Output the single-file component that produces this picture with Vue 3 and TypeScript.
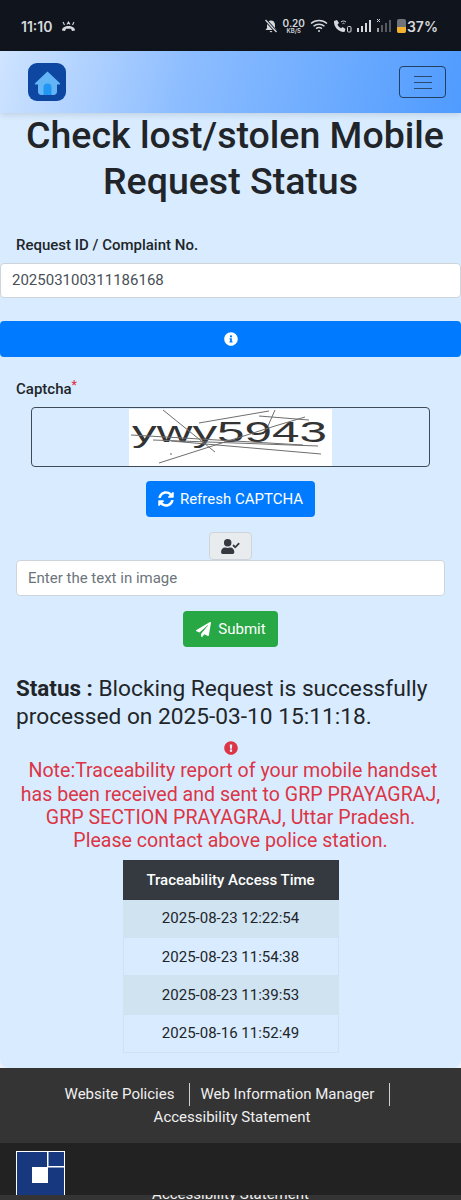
<script setup lang="ts">
const accessTimes = [
  '2025-08-23 12:22:54',
  '2025-08-23 11:54:38',
  '2025-08-23 11:39:53',
  '2025-08-16 11:52:49',
]
</script>

<template>
  <div class="screen">
    <div class="status-bar">
      <div class="status-left">
        <span class="clock">11:10</span>
        <svg width="15" height="11" viewBox="0 0 15 11" fill="#d5d8dc">
          <path d="M1 9.500c0-3 3-4.500 6.500-4.500S14 6.500 14 9.500l-3 .5-1-2.200H5L4 10z" />
          <path d="M3.500 4L2 1M6 3.500L7.500 1 9 3.500M11.500 4L13 1" stroke="#d5d8dc" fill="none" stroke-width="1.100" />
        </svg>
      </div>
      <div class="status-right">
        <svg width="14" height="14" viewBox="0 0 14 14" fill="#d5d8dc">
          <path d="M7 1.500c2.500 0 4 2 4 4.500v3l1.500 2h-11L3 9V6c0-2.500 1.500-4.500 4-4.500zM5.500 12h3L7 13.500z" />
          <path d="M1.500 1l11 12" stroke="#10141c" stroke-width="3" />
          <path d="M1.500 1l11 12" stroke="#d5d8dc" stroke-width="1.300" />
        </svg>
        <div class="speed"><span>0.20</span><span class="speed-unit">KB/S</span></div>
        <svg width="18" height="14" viewBox="0 0 18 14" fill="none" stroke="#d5d8dc" stroke-width="1.500">
          <path d="M1 4.500c4.500-4 11.500-4 16 0M3.500 7.200c3-2.700 8-2.700 11 0M6 9.700c1.700-1.300 4.300-1.300 6 0" />
          <circle cx="9" cy="12" r="1" fill="#d5d8dc" stroke="none" />
        </svg>
        <svg width="19" height="14" viewBox="0 0 19 14" fill="#d5d8dc">
          <path d="M1 2l3-1 2 3-1.500 1.500c.7 1.700 2 3 3.500 3.700L9.500 8l3 2-1 3C6 13.500 .5 8 1 2z" />
          <path d="M8 3c1.500-1.300 3.500-1.300 5 0M9.500 4.700c.7-.6 1.300-.6 2 0" stroke="#d5d8dc" fill="none" />
          <rect x="14.500" y="7.500" width="3.500" height="5.500" rx="1" fill="none" stroke="#d5d8dc" />
        </svg>
        <svg width="15" height="14" viewBox="0 0 15 14" fill="#d5d8dc">
          <rect x="0" y="9" width="2" height="4" /><rect x="4" y="7" width="2" height="6" />
          <rect x="8" y="4" width="2" height="9" /><rect x="12" y="1" width="2" height="12" />
        </svg>
        <svg width="15" height="14" viewBox="0 0 15 14" fill="#565a60">
          <path d="M0 0l3 3M3 0L0 3" stroke="#d5d8dc" fill="none" />
          <rect x="0" y="9" width="2" height="4" fill="#9a9da1" /><rect x="4" y="6" width="2" height="7" />
          <rect x="8" y="4" width="2" height="9" /><rect x="12" y="1" width="2" height="12" />
        </svg>
        <div class="battery"><div class="battery-fill"></div></div>
        <span class="battery-pct">37%</span>
      </div>
    </div>

    <nav class="navbar">
      <div class="home-logo">
        <svg width="27" height="27" viewBox="0 0 27 27">
          <path d="M13.500 2.500L26 14.200c.5.600.1 1.300-.6 1.300H23v7c0 2-1.300 3.500-3.500 3.500h-12C5.300 26 4 24.500 4 22.500v-7H1.600c-.7 0-1.100-.7-.6-1.300z" fill="#64b5f6" />
          <path d="M9.500 26v-7.500a4 4 0 0 1 8 0V26z" fill="#2196f3" />
        </svg>
      </div>
      <button class="toggler">
        <span></span><span></span><span></span>
      </button>
    </nav>

    <main class="content">
      <h1 class="title">Check lost/stolen Mobile Request Status</h1>

      <label class="field-label request-label">Request ID / Complaint No.</label>
      <div class="input request-input">202503100311186168</div>

      <div class="info-bar">
        <svg width="14" height="14" viewBox="0 0 512 512" fill="#fff">
          <path d="M256 8C119 8 8 119 8 256s111 248 248 248 248-111 248-248S393 8 256 8zm0 110a42 42 0 1 1 0 84 42 42 0 0 1 0-84zm56 254c0 7-5 12-12 12h-88c-7 0-12-5-12-12v-24c0-7 5-12 12-12h12v-64h-12c-7 0-12-5-12-12v-24c0-7 5-12 12-12h64c7 0 12 5 12 12v100h12c7 0 12 5 12 12z" />
        </svg>
      </div>

      <label class="field-label captcha-label">Captcha<span class="req">*</span></label>
      <div class="captcha-box">
        <svg class="captcha-img" width="203" height="57" viewBox="0 0 203 57">
          <rect width="203" height="57" fill="#fff" />
          <text x="3" y="33" class="captcha-text" textLength="195" lengthAdjust="spacingAndGlyphs">ywy5943</text>
          <g stroke="#6e6e6e" fill="none">
            <path d="M34 1l52 42M30 54L146 17 176 8M2 26l172 10M24 31l165 6M42 32l150 13M70 14l70-12M146 1l-7 16M130 7l50 4" />
          </g>
          <circle cx="42" cy="45" r="1" fill="#999" />
        </svg>
      </div>

      <div class="btn-row refresh-row">
        <button class="btn btn-blue">
          <svg width="16" height="16" viewBox="0 0 512 512" fill="#fff">
            <path d="M370.720 133.280C339.458 104.008 298.888 87.962 255.848 88c-77.458.068-144.328 53.178-162.791 126.850-1.344 5.363-6.122 9.150-11.651 9.150H24.103c-7.498 0-13.194-6.807-11.807-14.176C33.933 94.924 134.813 8 256 8c66.448 0 126.791 26.136 171.315 68.685L463.030 40.970C478.149 25.851 504 36.559 504 57.941V192c0 13.255-10.745 24-24 24H345.941c-21.382 0-32.090-25.851-16.971-40.971l41.750-41.749zM32 296h134.059c21.382 0 32.090 25.851 16.971 40.971l-41.750 41.750c31.262 29.273 71.835 45.319 114.876 45.280 77.418-.070 144.315-53.144 162.787-126.849 1.344-5.363 6.122-9.150 11.651-9.150h57.304c7.498 0 13.194 6.807 11.807 14.176C478.067 417.076 377.187 504 256 504c-66.448 0-126.791-26.136-171.315-68.685L48.970 471.030C33.851 486.149 8 475.441 8 454.059V320c0-13.255 10.745-24 24-24z" />
          </svg>
          Refresh CAPTCHA
        </button>
      </div>

      <div class="btn-row addon-row">
        <div class="addon">
          <svg width="19" height="15" viewBox="0 0 640 512" fill="#343a40">
            <path d="M224 256a128 128 0 1 0 0-256 128 128 0 0 0 0 256zm90 32h-17a174 174 0 0 1-146 0h-17C60 288 0 348 0 422v42c0 26 22 48 48 48h352c26 0 48-22 48-48v-42c0-74-60-134-134-134z" />
            <path d="M633 159l-28-28c-5-5-12-5-17 0L482 236l-46-46c-5-5-12-5-17 0l-28 28c-5 5-5 12 0 17l82 82c5 5 12 5 17 0l143-143c5-5 5-12 0-15z" />
          </svg>
        </div>
      </div>
      <div class="input captcha-input">Enter the text in image</div>

      <div class="btn-row submit-row">
        <button class="btn btn-green">
          <svg width="15" height="15" viewBox="0 0 512 512" fill="#fff">
            <path d="M476 3L13 270c-18 10-16 35 2 43l106 44 287-253c5-5 13 2 8 8L175 403v81c0 24 29 33 43 16l64-78 125 52c14 6 31-3 33-18L511 28c4-20-18-36-35-25z" />
          </svg>
          Submit
        </button>
      </div>

      <p class="status"><strong>Status :</strong> Blocking Request is successfully processed on 2025-03-10 15:11:18.</p>

      <div class="note">
        <svg width="14" height="14" viewBox="0 0 512 512" fill="#dc3545">
          <path d="M504 256c0 137-111 248-248 248S8 393 8 256 119 8 256 8s248 111 248 248zm-248 50a46 46 0 1 0 0 92 46 46 0 0 0 0-92zm-44-166l8 136c0 6 6 11 12 11h48c6 0 12-5 12-11l8-136c0-7-5-12-12-12h-64c-7 0-12 5-12 12z" />
        </svg>
        <div class="note-text">&nbsp;Note:Traceability report of your mobile handset has been received and sent to GRP PRAYAGRAJ, GRP SECTION PRAYAGRAJ, Uttar Pradesh. Please contact above police station.</div>
      </div>

      <table class="access-table">
        <thead>
          <tr><th>Traceability Access Time</th></tr>
        </thead>
        <tbody>
          <tr v-for="t in accessTimes" :key="t"><td>{{ t }}</td></tr>
        </tbody>
      </table>
    </main>

    <footer class="footer">
      <div class="footer-links">
        <a class="link link-sep">Website Policies</a>
        <a class="link link-sep link-manager">Web Information Manager</a>
        <a class="link link-last">Accessibility Statement</a>
      </div>
      <div class="footer-bottom">
        <svg class="footer-logo" width="49" height="49" viewBox="0 0 49 49">
          <rect x=".5" y=".5" width="48" height="48" fill="#17387f" stroke="#fff" />
          <rect x="31" y="1" width="1.500" height="15" fill="#fff" />
          <rect x="32" y="15" width="16" height="1.500" fill="#fff" />
          <rect x="16" y="16" width="16" height="16" fill="#fff" />
        </svg>
      </div>
      <div class="footer-peek"><span>Accessibility Statement</span></div>
    </footer>
  </div>
</template>

<style scoped>
.screen {
  width: 461px;
  height: 1200px;
  overflow: hidden;
  background: #eef2f6;
  font-family: Roboto, "Liberation Sans", sans-serif;
  color: #212529;
  display: flex;
  flex-direction: column;
}

.status-bar {
  height: 51px;
  flex: none;
  box-sizing: border-box;
  background: #10141c;
  color: #d5d8dc;
  display: flex;
  justify-content: space-between;
  align-items: center;
  padding: 4px 23px 3px 21px;
  font-family: Inter, Roboto, sans-serif;
}

.status-left {
  display: flex;
  align-items: center;
  gap: 9px;
}

.clock {
  font-size: 14px;
  font-weight: 600;
}

.status-right {
  display: flex;
  align-items: center;
  gap: 5px;
}

.speed {
  display: flex;
  flex-direction: column;
  align-items: center;
  font-size: 10px;
  font-weight: 600;
  line-height: 9px;
}

.speed-unit {
  font-size: 6px;
  line-height: 6px;
}

.battery {
  width: 9px;
  height: 14px;
  border-radius: 2px;
  background: #70737a;
  display: flex;
  align-items: flex-end;
  overflow: hidden;
}

.battery-fill {
  width: 100%;
  height: 6px;
  background: #f5b32d;
}

.battery-pct {
  font-size: 14px;
  font-weight: 600;
  margin-left: -4px;
}

.navbar {
  height: 62px;
  flex: none;
  box-sizing: border-box;
  display: flex;
  justify-content: space-between;
  align-items: center;
  padding: 0 15px 0 28px;
  background: linear-gradient(105deg, #cfe4ff 0%, #8dbdff 40%, #4f9bff 100%);
  box-shadow: 0 2px 6px rgba(0, 0, 0, 0.12);
  position: relative;
}

.home-logo {
  width: 38px;
  height: 38px;
  border-radius: 9px;
  background: #0d47a1;
  display: flex;
  align-items: center;
  justify-content: center;
}

.toggler {
  width: 47px;
  height: 32px;
  box-sizing: border-box;
  padding: 0;
  background: transparent;
  border: 1px solid #22405f;
  border-radius: 4px;
  display: flex;
  flex-direction: column;
  align-items: center;
  justify-content: center;
  gap: 5px;
}

.toggler span {
  width: 18px;
  height: 1px;
  background: #2c4a6b;
}

.content {
  flex: 1;
  min-height: 0;
  display: flex;
  flex-direction: column;
  background: #d9ecff;
  border-radius: 0 0 8px 8px;
  overflow: hidden;
}

.title {
  margin: 0;
  padding: 0 15px;
  text-align: center;
  text-indent: 9px;
  font-size: 37.500px;
  line-height: 45.600px;
  font-weight: 500;
}

.field-label {
  display: block;
  font-size: 15px;
  font-weight: 500;
  line-height: 24px;
  margin-left: 16px;
}

.request-label {
  margin-top: 29px;
}

.input {
  box-sizing: border-box;
  height: 35px;
  background: #fff;
  border: 1px solid #ced4da;
  border-radius: 4px;
  font-size: 15px;
  line-height: 33px;
  padding: 0 11px;
  color: #495057;
}

.request-input {
  margin-top: 6px;
}

.info-bar {
  margin-top: 23px;
  height: 36px;
  background: #007bff;
  border-radius: 4px;
  display: flex;
  align-items: center;
  justify-content: center;
}

.captcha-label {
  margin-top: 20px;
}

.req {
  color: #dc3545;
  font-size: 12px;
  vertical-align: top;
  line-height: 16px;
}

.captcha-box {
  margin: 6px 31px 0;
  height: 60px;
  box-sizing: border-box;
  border: 1px solid #3f4a59;
  border-radius: 4px;
  display: flex;
  justify-content: center;
}

.captcha-img {
  display: block;
  margin-top: 1px;
}

.captcha-text {
  font-family: "Liberation Sans", sans-serif;
  font-size: 30px;
  fill: #333;
}

.btn-row {
  display: flex;
  justify-content: center;
}

.btn {
  height: 36px;
  box-sizing: border-box;
  border: none;
  border-radius: 4px;
  color: #fff;
  font-family: inherit;
  font-size: 15px;
  display: flex;
  align-items: center;
  gap: 6px;
  padding: 0 12px;
}

.btn-blue {
  background: #007bff;
}

.btn-green {
  background: #28a745;
  padding: 0 12px 0 13px;
  gap: 7px;
}

.refresh-row {
  margin-top: 14px;
}

.addon-row {
  margin-top: 15px;
}

.addon {
  width: 43px;
  height: 28px;
  box-sizing: border-box;
  background: #e9ecef;
  border: 1px solid #ced4da;
  border-radius: 4px;
  display: flex;
  align-items: center;
  justify-content: center;
}

.captcha-input {
  margin: 0 16px;
  height: 36px;
  line-height: 34px;
  color: #6c757d;
}

.submit-row {
  margin-top: 15px;
}

.status {
  margin: 27px 16px 0;
  font-size: 22.700px;
  line-height: 28px;
  font-weight: 400;
}

.status strong {
  font-size: 22.400px;
  font-weight: 700;
}

.note {
  margin-top: 10px;
  display: flex;
  flex-direction: column;
  align-items: center;
  color: #dc3545;
  text-align: center;
  font-size: 19.600px;
  font-weight: 400;
  line-height: 23.400px;
}

.note-text {
  padding: 0 16px;
  margin-top: 4px;
}

.access-table {
  margin: 7px auto 0;
  width: 216px;
  border-collapse: collapse;
  font-size: 15px;
}

.access-table th {
  background: #343a40;
  color: #fff;
  font-weight: 500;
  height: 38px;
  padding: 0;
  border: 1px solid #32383e;
}

.access-table td {
  height: 37.300px;
  padding: 0;
  text-align: center;
  border: 1px solid #d0e2f2;
}

.access-table tbody tr:nth-child(odd) td {
  background: #d0e3f1;
}

.footer {
  flex: none;
  height: 132px;
  background: #343434;
  color: #f0f0f0;
  font-size: 15px;
  overflow: hidden;
}

.footer-links {
  height: 75px;
  box-sizing: border-box;
  padding: 15px 18px 0 0;
  text-align: center;
  line-height: 23px;
}

.link {
  display: inline-block;
}

.link-sep {
  padding: 0 15px 0 12px;
  border-right: 1px solid #d0d0d0;
}

.link-manager {
  padding-left: 10px;
}

.link-last {
  margin-left: 21px;
}

.footer-bottom {
  height: 52px;
  background: #222;
  padding-left: 16px;
  overflow: hidden;
  box-sizing: border-box;
  padding-top: 8px;
}

.footer-logo {
  display: block;
}

.footer-peek {
  height: 5px;
  overflow: hidden;
  text-align: center;
}

.footer-peek span {
  display: block;
  line-height: 18px;
  margin-top: -10px;
}
</style>
